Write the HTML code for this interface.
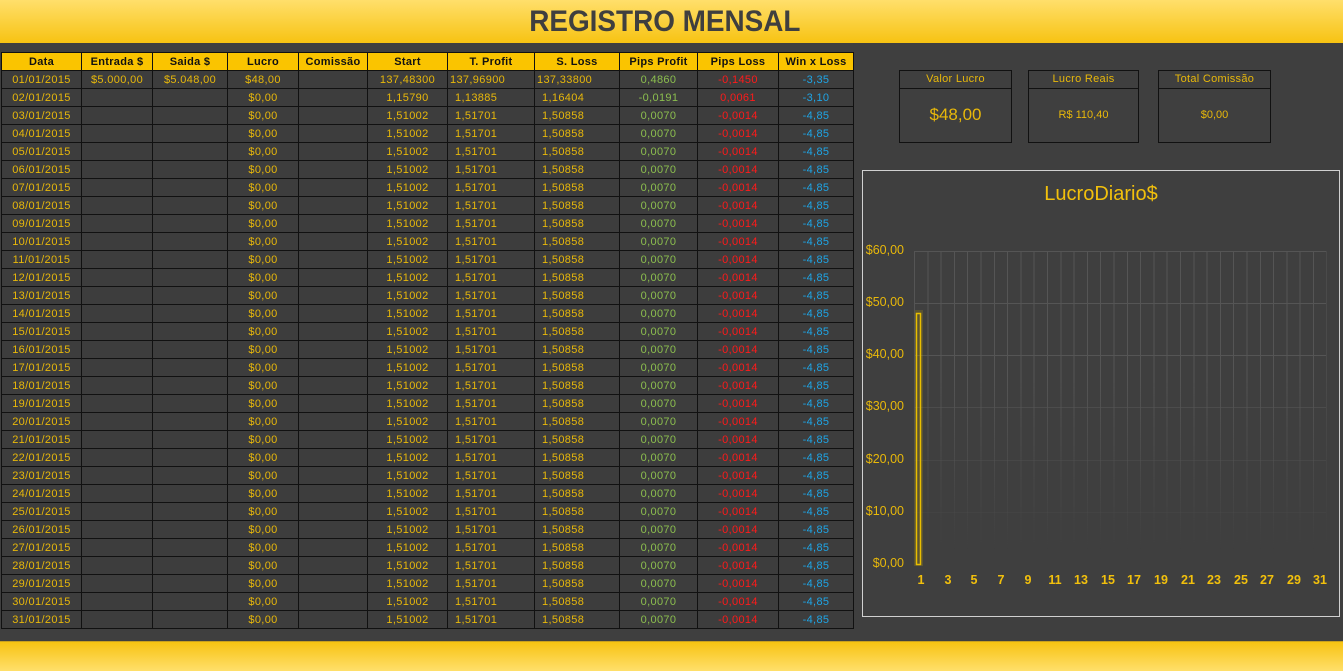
<!DOCTYPE html>
<html><head><meta charset="utf-8"><style>
*{margin:0;padding:0;box-sizing:border-box}
body{width:1343px;height:671px;background:#3f3f3f;position:relative;overflow:hidden;font-family:"Liberation Sans",sans-serif}
.top{position:absolute;left:0;top:0;width:1343px;height:43px;background:linear-gradient(#ffdf6b,#f7c312);text-align:center}
.top span{display:inline-block;font-size:30px;color:#3f3f3f;line-height:44px;font-weight:bold;transform:scaleX(0.93);margin-left:-14px}
.bot{position:absolute;left:0;top:641px;width:1343px;height:30px;background:linear-gradient(#f7c312,#ffdf6b);border-top:1px solid #c9a020}
table{position:absolute;left:1px;top:52px;border-collapse:collapse;font-size:11px;letter-spacing:0.35px;table-layout:fixed}
td,th{border:1px solid #111;height:18px;padding:0;white-space:nowrap;overflow:hidden}
th{background:#fac400;color:#111;font-weight:bold;font-size:11px;letter-spacing:0.3px}
td{color:#e8b80a;text-align:center;background:#3d3d3d}
td.l{text-align:left;padding-left:7px}
td.g{color:#8cbf4e}td.r{color:#ff1a1a}td.b{color:#1ea5e6}
.box{position:absolute;top:70px;height:73px;border:1px solid #111;color:#e8b80a;text-align:center}
.box .h{height:18px;border-bottom:1px solid #111;font-size:11px;line-height:16px;letter-spacing:0.3px}
.chart{position:absolute;left:862px;top:170px;width:478px;height:447px;border:1px solid #d0d0d0}
.yl{position:absolute;right:439px;font-size:12.5px;color:#e8b80a}
.xl{position:absolute;top:573px;font-size:12.5px;font-weight:bold;color:#f2c00c;transform:translateX(-50%)}
</style></head><body>
<div class="top"><span>REGISTRO MENSAL</span></div>
<table>
<colgroup><col style="width:80px"><col style="width:71px"><col style="width:75px"><col style="width:71px"><col style="width:69px"><col style="width:80px"><col style="width:87px"><col style="width:85px"><col style="width:78px"><col style="width:81px"><col style="width:75px"></colgroup>
<tr><th>Data</th><th>Entrada $</th><th>Saida $</th><th>Lucro</th><th>Comissão</th><th>Start</th><th>T. Profit</th><th>S. Loss</th><th>Pips Profit</th><th>Pips Loss</th><th>Win x Loss</th></tr>
<tr><td>01/01/2015</td><td>$5.000,00</td><td>$5.048,00</td><td>$48,00</td><td></td><td>137,48300</td><td class="l" style="padding-left:2px">137,96900</td><td class="l" style="padding-left:2px">137,33800</td><td class="g">0,4860</td><td class="r">-0,1450</td><td class="b">-3,35</td></tr>
<tr><td>02/01/2015</td><td></td><td></td><td>$0,00</td><td></td><td>1,15790</td><td class="l">1,13885</td><td class="l">1,16404</td><td class="g">-0,0191</td><td class="r">0,0061</td><td class="b">-3,10</td></tr>
<tr><td>03/01/2015</td><td></td><td></td><td>$0,00</td><td></td><td>1,51002</td><td class="l">1,51701</td><td class="l">1,50858</td><td class="g">0,0070</td><td class="r">-0,0014</td><td class="b">-4,85</td></tr>
<tr><td>04/01/2015</td><td></td><td></td><td>$0,00</td><td></td><td>1,51002</td><td class="l">1,51701</td><td class="l">1,50858</td><td class="g">0,0070</td><td class="r">-0,0014</td><td class="b">-4,85</td></tr>
<tr><td>05/01/2015</td><td></td><td></td><td>$0,00</td><td></td><td>1,51002</td><td class="l">1,51701</td><td class="l">1,50858</td><td class="g">0,0070</td><td class="r">-0,0014</td><td class="b">-4,85</td></tr>
<tr><td>06/01/2015</td><td></td><td></td><td>$0,00</td><td></td><td>1,51002</td><td class="l">1,51701</td><td class="l">1,50858</td><td class="g">0,0070</td><td class="r">-0,0014</td><td class="b">-4,85</td></tr>
<tr><td>07/01/2015</td><td></td><td></td><td>$0,00</td><td></td><td>1,51002</td><td class="l">1,51701</td><td class="l">1,50858</td><td class="g">0,0070</td><td class="r">-0,0014</td><td class="b">-4,85</td></tr>
<tr><td>08/01/2015</td><td></td><td></td><td>$0,00</td><td></td><td>1,51002</td><td class="l">1,51701</td><td class="l">1,50858</td><td class="g">0,0070</td><td class="r">-0,0014</td><td class="b">-4,85</td></tr>
<tr><td>09/01/2015</td><td></td><td></td><td>$0,00</td><td></td><td>1,51002</td><td class="l">1,51701</td><td class="l">1,50858</td><td class="g">0,0070</td><td class="r">-0,0014</td><td class="b">-4,85</td></tr>
<tr><td>10/01/2015</td><td></td><td></td><td>$0,00</td><td></td><td>1,51002</td><td class="l">1,51701</td><td class="l">1,50858</td><td class="g">0,0070</td><td class="r">-0,0014</td><td class="b">-4,85</td></tr>
<tr><td>11/01/2015</td><td></td><td></td><td>$0,00</td><td></td><td>1,51002</td><td class="l">1,51701</td><td class="l">1,50858</td><td class="g">0,0070</td><td class="r">-0,0014</td><td class="b">-4,85</td></tr>
<tr><td>12/01/2015</td><td></td><td></td><td>$0,00</td><td></td><td>1,51002</td><td class="l">1,51701</td><td class="l">1,50858</td><td class="g">0,0070</td><td class="r">-0,0014</td><td class="b">-4,85</td></tr>
<tr><td>13/01/2015</td><td></td><td></td><td>$0,00</td><td></td><td>1,51002</td><td class="l">1,51701</td><td class="l">1,50858</td><td class="g">0,0070</td><td class="r">-0,0014</td><td class="b">-4,85</td></tr>
<tr><td>14/01/2015</td><td></td><td></td><td>$0,00</td><td></td><td>1,51002</td><td class="l">1,51701</td><td class="l">1,50858</td><td class="g">0,0070</td><td class="r">-0,0014</td><td class="b">-4,85</td></tr>
<tr><td>15/01/2015</td><td></td><td></td><td>$0,00</td><td></td><td>1,51002</td><td class="l">1,51701</td><td class="l">1,50858</td><td class="g">0,0070</td><td class="r">-0,0014</td><td class="b">-4,85</td></tr>
<tr><td>16/01/2015</td><td></td><td></td><td>$0,00</td><td></td><td>1,51002</td><td class="l">1,51701</td><td class="l">1,50858</td><td class="g">0,0070</td><td class="r">-0,0014</td><td class="b">-4,85</td></tr>
<tr><td>17/01/2015</td><td></td><td></td><td>$0,00</td><td></td><td>1,51002</td><td class="l">1,51701</td><td class="l">1,50858</td><td class="g">0,0070</td><td class="r">-0,0014</td><td class="b">-4,85</td></tr>
<tr><td>18/01/2015</td><td></td><td></td><td>$0,00</td><td></td><td>1,51002</td><td class="l">1,51701</td><td class="l">1,50858</td><td class="g">0,0070</td><td class="r">-0,0014</td><td class="b">-4,85</td></tr>
<tr><td>19/01/2015</td><td></td><td></td><td>$0,00</td><td></td><td>1,51002</td><td class="l">1,51701</td><td class="l">1,50858</td><td class="g">0,0070</td><td class="r">-0,0014</td><td class="b">-4,85</td></tr>
<tr><td>20/01/2015</td><td></td><td></td><td>$0,00</td><td></td><td>1,51002</td><td class="l">1,51701</td><td class="l">1,50858</td><td class="g">0,0070</td><td class="r">-0,0014</td><td class="b">-4,85</td></tr>
<tr><td>21/01/2015</td><td></td><td></td><td>$0,00</td><td></td><td>1,51002</td><td class="l">1,51701</td><td class="l">1,50858</td><td class="g">0,0070</td><td class="r">-0,0014</td><td class="b">-4,85</td></tr>
<tr><td>22/01/2015</td><td></td><td></td><td>$0,00</td><td></td><td>1,51002</td><td class="l">1,51701</td><td class="l">1,50858</td><td class="g">0,0070</td><td class="r">-0,0014</td><td class="b">-4,85</td></tr>
<tr><td>23/01/2015</td><td></td><td></td><td>$0,00</td><td></td><td>1,51002</td><td class="l">1,51701</td><td class="l">1,50858</td><td class="g">0,0070</td><td class="r">-0,0014</td><td class="b">-4,85</td></tr>
<tr><td>24/01/2015</td><td></td><td></td><td>$0,00</td><td></td><td>1,51002</td><td class="l">1,51701</td><td class="l">1,50858</td><td class="g">0,0070</td><td class="r">-0,0014</td><td class="b">-4,85</td></tr>
<tr><td>25/01/2015</td><td></td><td></td><td>$0,00</td><td></td><td>1,51002</td><td class="l">1,51701</td><td class="l">1,50858</td><td class="g">0,0070</td><td class="r">-0,0014</td><td class="b">-4,85</td></tr>
<tr><td>26/01/2015</td><td></td><td></td><td>$0,00</td><td></td><td>1,51002</td><td class="l">1,51701</td><td class="l">1,50858</td><td class="g">0,0070</td><td class="r">-0,0014</td><td class="b">-4,85</td></tr>
<tr><td>27/01/2015</td><td></td><td></td><td>$0,00</td><td></td><td>1,51002</td><td class="l">1,51701</td><td class="l">1,50858</td><td class="g">0,0070</td><td class="r">-0,0014</td><td class="b">-4,85</td></tr>
<tr><td>28/01/2015</td><td></td><td></td><td>$0,00</td><td></td><td>1,51002</td><td class="l">1,51701</td><td class="l">1,50858</td><td class="g">0,0070</td><td class="r">-0,0014</td><td class="b">-4,85</td></tr>
<tr><td>29/01/2015</td><td></td><td></td><td>$0,00</td><td></td><td>1,51002</td><td class="l">1,51701</td><td class="l">1,50858</td><td class="g">0,0070</td><td class="r">-0,0014</td><td class="b">-4,85</td></tr>
<tr><td>30/01/2015</td><td></td><td></td><td>$0,00</td><td></td><td>1,51002</td><td class="l">1,51701</td><td class="l">1,50858</td><td class="g">0,0070</td><td class="r">-0,0014</td><td class="b">-4,85</td></tr>
<tr><td>31/01/2015</td><td></td><td></td><td>$0,00</td><td></td><td>1,51002</td><td class="l">1,51701</td><td class="l">1,50858</td><td class="g">0,0070</td><td class="r">-0,0014</td><td class="b">-4,85</td></tr>
</table>

<div class="box" style="left:899px;width:113px"><div class="h">Valor Lucro</div><div style="font-size:17px;line-height:52px">$48,00</div></div>
<div class="box" style="left:1028px;width:111px"><div class="h">Lucro Reais</div><div style="font-size:11px;line-height:52px">R$ 110,40</div></div>
<div class="box" style="left:1158px;width:113px"><div class="h">Total Comissão</div><div style="font-size:11px;line-height:52px">$0,00</div></div>

<div class="chart"></div>
<div style="position:absolute;left:862px;width:478px;top:183px;text-align:center;font-size:20px;color:#f2c00c">LucroDiario$</div>
<svg style="position:absolute;left:0;top:0" width="1343" height="671">
<g stroke="#555" stroke-width="1">
<line x1="914" y1="251.5" x2="1326" y2="251.5"/>
<line x1="914" y1="303.5" x2="1326" y2="303.5"/>
<line x1="914" y1="355.5" x2="1326" y2="355.5"/>
<line x1="914" y1="407.5" x2="1326" y2="407.5" stroke="#4c4c4c"/>
<line x1="914" y1="460.5" x2="1326" y2="460.5" stroke="#474747"/>
<line x1="914" y1="512.5" x2="1326" y2="512.5" stroke="#434343"/>
</g>
<rect x="916.5" y="313.5" width="4" height="251" fill="none" stroke="#f2c400" stroke-width="1.5"/>
<rect x="914" y="310" width="9" height="256" fill="#c8a800" opacity="0.2"/>
</svg>
<div class="yl" style="top:243px">$60,00</div>
<div class="yl" style="top:295px">$50,00</div>
<div class="yl" style="top:347px">$40,00</div>
<div class="yl" style="top:399px">$30,00</div>
<div class="yl" style="top:452px">$20,00</div>
<div class="yl" style="top:504px">$10,00</div>
<div class="yl" style="top:556px">$0,00</div>
<div class="xl" style="left:921px">1</div><div class="xl" style="left:948px">3</div><div class="xl" style="left:974px">5</div><div class="xl" style="left:1001px">7</div><div class="xl" style="left:1028px">9</div><div class="xl" style="left:1055px">11</div><div class="xl" style="left:1081px">13</div><div class="xl" style="left:1108px">15</div><div class="xl" style="left:1134px">17</div><div class="xl" style="left:1161px">19</div><div class="xl" style="left:1188px">21</div><div class="xl" style="left:1214px">23</div><div class="xl" style="left:1241px">25</div><div class="xl" style="left:1267px">27</div><div class="xl" style="left:1294px">29</div><div class="xl" style="left:1320px">31</div>
<div style="position:absolute;left:914px;top:251px;width:413px;height:314px;background:repeating-linear-gradient(90deg,#555 0 1px,transparent 1px 13.3px);-webkit-mask-image:linear-gradient(#000 40%,transparent 95%);mask-image:linear-gradient(#000 40%,transparent 95%)"></div>
<div class="bot"></div>
</body></html>
